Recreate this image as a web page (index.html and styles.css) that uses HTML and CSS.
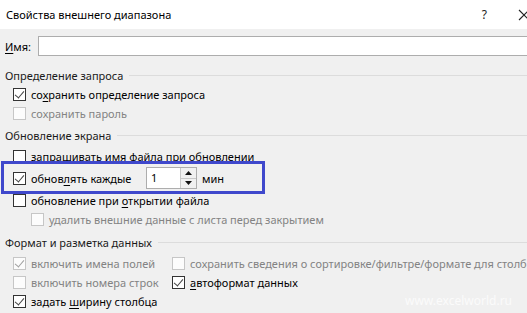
FILE: index.html
```html
<!DOCTYPE html>
<html lang="ru">
<head>
  <meta charset="UTF-8">
  <title>Свойства внешнего диапазона</title>
  <link rel="stylesheet" href="styles.css">
</head>
<body>
  <div class="dialog">
    <div class="titlebar">
      <span class="title">Свойства внешнего диапазона</span>
      <span class="help">?</span>
      <svg class="close" width="12" height="12" viewBox="0 0 12 12"><path d="M1 1 L11 11 M11 1 L1 11" stroke="#222" stroke-width="1.1" fill="none"/></svg>
    </div>

    <div class="content">
      <div class="name-row">
        <label><u>И</u>мя:</label>
        <input type="text" class="name-input">
      </div>

      <div class="group g1">Определение запроса</div>
      <div class="row"><span class="cb checked"></span><span>со<u>х</u>ранить определение запроса</span></div>
      <div class="row disabled"><span class="cb"></span><span>сохранить пароль</span></div>

      <div class="group g2">Обновление экрана</div>
      <div class="row r-ask"><span class="cb"></span><span>запрашивать имя файла при обновлении</span></div>
      <div class="row r-every">
        <span class="cb checked"></span><span class="every-label">обнов<u>л</u>ять каждые</span>
        <div class="spin">
          <span class="spin-value">1</span>
          <div class="spin-btns">
            <span class="spin-btn"><svg width="7" height="4" viewBox="0 0 7 4"><path d="M0 4 L3.5 0 L7 4 Z" fill="#111"/></svg></span>
            <span class="spin-btn"><svg width="7" height="4" viewBox="0 0 7 4"><path d="M0 0 L3.5 4 L7 0 Z" fill="#111"/></svg></span>
          </div>
        </div>
        <span class="unit">мин</span>
      </div>
      <div class="row r-open"><span class="cb"></span><span>обновление при <u>о</u>ткрытии файла</span></div>
      <div class="row disabled sub"><span class="cb"></span><span>удалить внешние данные с листа перед закрытием</span></div>

      <div class="group g3">Формат и разметка данных</div>
      <div class="grid">
        <div class="row disabled"><span class="cb checked"></span><span>включить имена полей</span></div>
        <div class="row disabled"><span class="cb"></span><span>сохранить сведения о сортировке/фильтре/формате для столбцов</span></div>
        <div class="row disabled"><span class="cb"></span><span>включить номера строк</span></div>
        <div class="row"><span class="cb checked"></span><span><u>а</u>втоформат данных</span></div>
        <div class="row"><span class="cb checked"></span><span>задать <u>ш</u>ирину столбца</span></div>
      </div>
    </div>

    <div class="highlight"></div>
    <div class="watermark">www.excelworld.ru</div>
  </div>
</body>
</html>
```

FILE: styles.css
```css
html, body {
  margin: 0;
  padding: 0;
}

body {
  width: 527px;
  height: 313px;
  overflow: hidden;
  background: #f0f0f0;
  font-family: 'Noto Sans', 'Open Sans', sans-serif;
  font-size: 11px;
  color: #000;
}

.dialog {
  position: relative;
  height: 313px;
  overflow: hidden;
}

.titlebar {
  height: 29px;
  background: #ffffff;
  display: flex;
  align-items: center;
  padding-left: 6px;
  box-sizing: border-box;
}

.title {
  flex: 1;
  font-size: 11px;
  color: #000;
}

.help {
  font-size: 12px;
  margin-right: 31px;
  color: #222;
}

.close {
  margin-right: -3px;
  flex-shrink: 0;
}

.content {
  padding-left: 5px;
}

u {
  text-decoration: underline;
  text-underline-offset: 2px;
}

.name-row {
  margin-top: 7px;
  height: 20px;
  display: flex;
  align-items: center;
}

.name-row label {
  width: 33px;
}

.name-input {
  flex: 1;
  height: 20px;
  box-sizing: border-box;
  border: 1px solid #adadad;
  background: #fff;
  margin: 0 -10px 0 0;
  padding: 0;
}

.group {
  height: 19px;
  display: flex;
  align-items: center;
  color: #1a1a1a;
}

.group::after {
  content: "";
  flex: 1;
  height: 1px;
  background: #dcdcdc;
  margin-left: 6px;
}

.g1 { margin-top: 10px; }
.g2 { margin-top: 3px; }
.g3 { margin-top: 4px; }

.row {
  height: 19px;
  display: flex;
  align-items: center;
  padding-left: 8px;
  white-space: nowrap;
}

.row.sub {
  padding-left: 26px;
}

.r-ask {
  margin-top: 2px;
}

.r-every {
  height: 22px;
  margin-top: 1px;
}

.r-open {
  margin-top: 2px;
}

.cb {
  width: 13px;
  height: 13px;
  box-sizing: border-box;
  border: 1px solid #333;
  background: #fff;
  margin-right: 5px;
  flex-shrink: 0;
  position: relative;
}

.cb.checked::after {
  content: "";
  position: absolute;
  left: 3px;
  top: 0px;
  width: 4px;
  height: 8px;
  border-right: 1px solid #444;
  border-bottom: 1px solid #444;
  transform: rotate(40deg);
}

.disabled {
  color: #838383;
}

.disabled .cb {
  border-color: #c6c6c6;
  background: #fcfcfc;
}

.disabled .cb.checked::after {
  border-color: #a0a0a0;
}

.every-label {
  width: 115px;
}

.spin {
  width: 51px;
  height: 22px;
  box-sizing: border-box;
  border: 1px solid #adadad;
  background: #fff;
  display: flex;
}

.spin-value {
  flex: 1;
  padding-left: 4px;
  line-height: 20px;
}

.spin-btns {
  width: 15px;
  display: flex;
  flex-direction: column;
  border-left: 1px solid #c8c8c8;
}

.spin-btn {
  flex: 1;
  display: flex;
  align-items: center;
  justify-content: center;
  background: #f0f0f0;
  border-bottom: 1px solid #c8c8c8;
}

.spin-btn:last-child {
  border-bottom: none;
}

.unit {
  margin-left: 5px;
}

.grid {
  display: grid;
  grid-template-columns: 159px 1fr;
  margin-top: 2px;
}

.grid .row:last-child {
  grid-column: 1 / 3;
}

.highlight {
  position: absolute;
  left: 1px;
  top: 161px;
  width: 264px;
  height: 33px;
  box-sizing: border-box;
  border: 3px solid #3f48cc;
}

.watermark {
  position: absolute;
  left: 405px;
  top: 292px;
  font-size: 12px;
  color: #fbfbfb;
}
```
